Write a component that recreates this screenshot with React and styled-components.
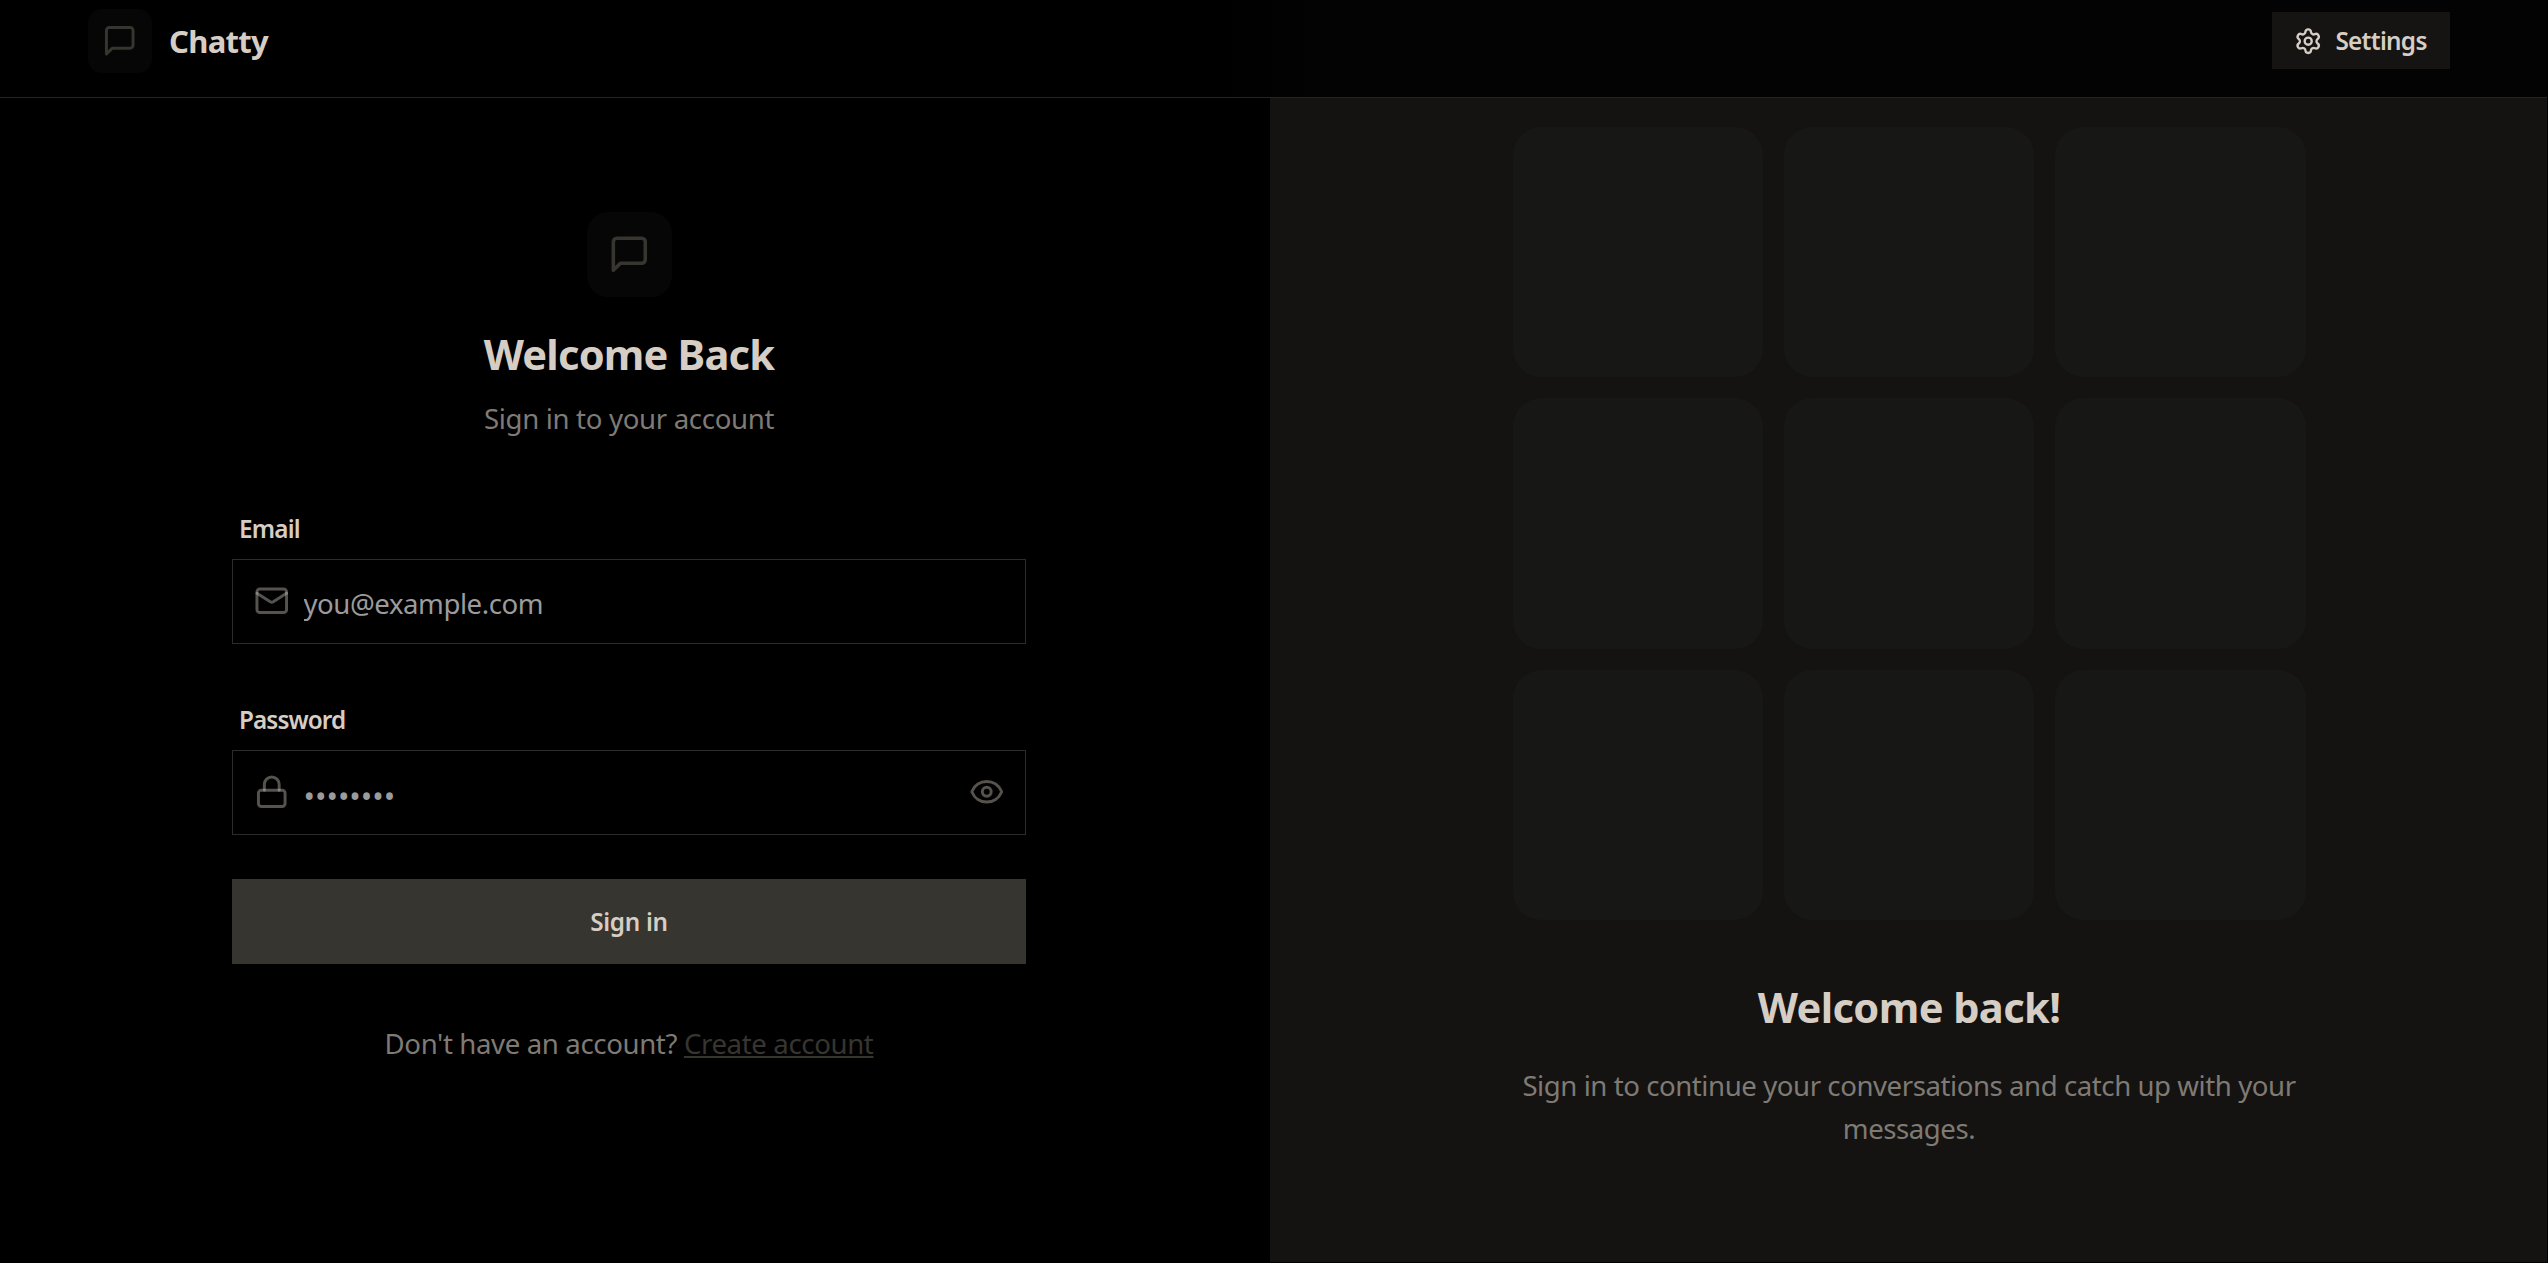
import React from "react";
import styled, { createGlobalStyle } from "styled-components";
import { Settings, Mail, Lock, Eye } from "lucide-react";

const GlobalStyle = createGlobalStyle`
  *, *::before, *::after { box-sizing: border-box; }
  html, body { margin: 0; background: #000; }
  body, input, button {
    font-family: "Noto Sans", "Open Sans", "Liberation Sans", sans-serif;
  }
`;

const Page = styled.div`
  width: 2547px;
  height: 1262px;
  display: flex;
  flex-direction: column;
  overflow: hidden;
  color: #d6cdc4;
  font-size: 27.6px;
  line-height: 42.6px;
`;

const Header = styled.header`
  flex: none;
  height: 98px;
  padding: 0 97px 15px 88px;
  display: flex;
  align-items: center;
  justify-content: space-between;
  border-bottom: 1px solid #242423;
  background: linear-gradient(to right, #000 1230px, #030303 1310px);
`;

const Brand = styled.div`
  display: flex;
  align-items: center;
  gap: 17px;
`;

const IconTile = styled.div`
  width: ${(p) => p.$size}px;
  height: ${(p) => p.$size}px;
  border-radius: ${(p) => p.$radius}px;
  display: flex;
  align-items: center;
  justify-content: center;
  background: #060606;
  color: #373530;
`;

const BrandName = styled.h1`
  margin: 0;
  font-size: 31px;
  font-weight: 700;
  letter-spacing: ${(p) => p.$spacing}px;
`;

const SettingsButton = styled.button`
  height: 57px;
  margin: 0 0 1px;
  width: 178px;
  padding: 0 0 0 22px;
  display: flex;
  align-items: center;
  gap: 13px;
  border: 0;
  background: #151412;
  color: #d6cdc4;
  font-size: 24.3px;
  font-weight: 600;
  letter-spacing: ${(p) => p.$spacing}px;

  svg { margin-top: 2px; }
`;

const Main = styled.main`
  flex: 1;
  display: grid;
  grid-template-columns: 1270px 1fr;
`;

const FormSide = styled.section`
  padding: 114px 12px 0 0;
  display: flex;
  flex-direction: column;
  align-items: center;
`;

const Title = styled.h2`
  margin: ${(p) => p.$top}px 0 0;
  font-size: 41.6px;
  line-height: 57px;
  font-weight: 700;
  letter-spacing: ${(p) => p.$spacing}px;
  white-space: nowrap;
`;

const Muted = styled.p`
  margin: ${(p) => p.$top}px 0 0;
  color: #7f7a74;
  letter-spacing: ${(p) => p.$spacing}px;
  text-align: center;
  white-space: nowrap;
`;

const Form = styled.form`
  width: 794px;
  margin-top: 65px;
  display: flex;
  flex-direction: column;
`;

const Field = styled.div`
  display: flex;
  flex-direction: column;
  margin-bottom: ${(p) => p.$bottom}px;
`;

const Label = styled.label`
  height: 54px;
  padding: 0 7px;
  line-height: 47px;
  font-size: 24.3px;
  font-weight: 600;
  letter-spacing: ${(p) => p.$spacing}px;
`;

const InputBox = styled.div`
  height: 85px;
  padding: 0 21px;
  display: flex;
  align-items: center;
  gap: 14px;
  border: 1px solid #2b2b2b;
  color: rgba(214, 205, 196, 0.4);
`;

const Input = styled.input`
  flex: 1;
  min-width: 0;
  padding: ${(p) => p.$drop}px 0 0;
  border: 0;
  outline: 0;
  background: transparent;
  color: #d6cdc4;
  font-size: ${(p) => p.$font}px;
  letter-spacing: ${(p) => p.$spacing}px;
  &::placeholder { color: #9b9b9e; opacity: 1; }
`;

const Submit = styled.button`
  height: 85px;
  border: 0;
  background: #373530;
  color: #d6cdc4;
  font-size: 24.3px;
  font-weight: 600;
  letter-spacing: ${(p) => p.$spacing}px;
`;

const Link = styled.a`
  color: #373530;
  text-decoration: underline;
  text-decoration-thickness: 2px;
  text-underline-offset: 2px;
`;

const PatternSide = styled.section`
  padding: 29px 0 0 1px;
  display: flex;
  flex-direction: column;
  align-items: center;
  background: #141311;
`;

const Grid = styled.div`
  width: 793px;
  display: grid;
  grid-template-columns: repeat(3, 1fr);
  gap: 21.3px;
`;

const Tile = styled.div`
  aspect-ratio: 1;
  border-radius: 28.4px;
  background: #171715;
`;

const ChatIcon = ({ size }) => (
  <svg width={size} height={size} viewBox="0 0 24 24" fill="none" stroke="currentColor" strokeWidth="2" strokeLinecap="round" strokeLinejoin="round">
    <path d="M21 15a2 2 0 0 1-2 2H7l-4 4V5a2 2 0 0 1 2-2h14a2 2 0 0 1 2 2z" />
  </svg>
);

export default function App() {
  return (
    <>
      <GlobalStyle />
      <Page>
        <Header>
          <Brand>
            <IconTile $size={64} $radius={14}><ChatIcon size={35.5} /></IconTile>
            <BrandName $spacing={-0.7}>Chatty</BrandName>
          </Brand>
          <SettingsButton $spacing={-0.7}>
            <Settings size={28.4} />
            <span>Settings</span>
          </SettingsButton>
        </Header>
        <Main>
          <FormSide>
            <IconTile $size={85} $radius={21}><ChatIcon size={42.6} /></IconTile>
            <Title $top={29} $spacing={-0.8}>Welcome Back</Title>
            <Muted $top={14} $spacing={-0.33}>Sign in to your account</Muted>
            <Form>
              <Field $bottom={52}>
                <Label $spacing={-0.8}>Email</Label>
                <InputBox>
                  <Mail size={35.5} />
                  <Input type="email" placeholder="you@example.com" $font={27.6} $drop={3} $spacing={-0.45} />
                </InputBox>
              </Field>
              <Field $bottom={44}>
                <Label $spacing={-0.9}>Password</Label>
                <InputBox>
                  <Lock size={35.5} />
                  <Input type="password" placeholder="••••••••" $font={30.5} $drop={8} $spacing={0} />
                  <Eye size={35.5} />
                </InputBox>
              </Field>
              <Submit type="button" $spacing={-0.3}>Sign in</Submit>
            </Form>
            <Muted $top={58} $spacing={-0.37}>
              Don't have an account? <Link>Create account</Link>
            </Muted>
          </FormSide>
          <PatternSide>
            <Grid>
              {Array.from({ length: 9 }, (_, i) => <Tile key={i} />)}
            </Grid>
            <Title $top={59} $spacing={-0.6}>Welcome back!</Title>
            <Muted $top={28} $spacing={-0.44}>
              Sign in to continue your conversations and catch up with your<br />messages.
            </Muted>
          </PatternSide>
        </Main>
      </Page>
    </>
  );
}
